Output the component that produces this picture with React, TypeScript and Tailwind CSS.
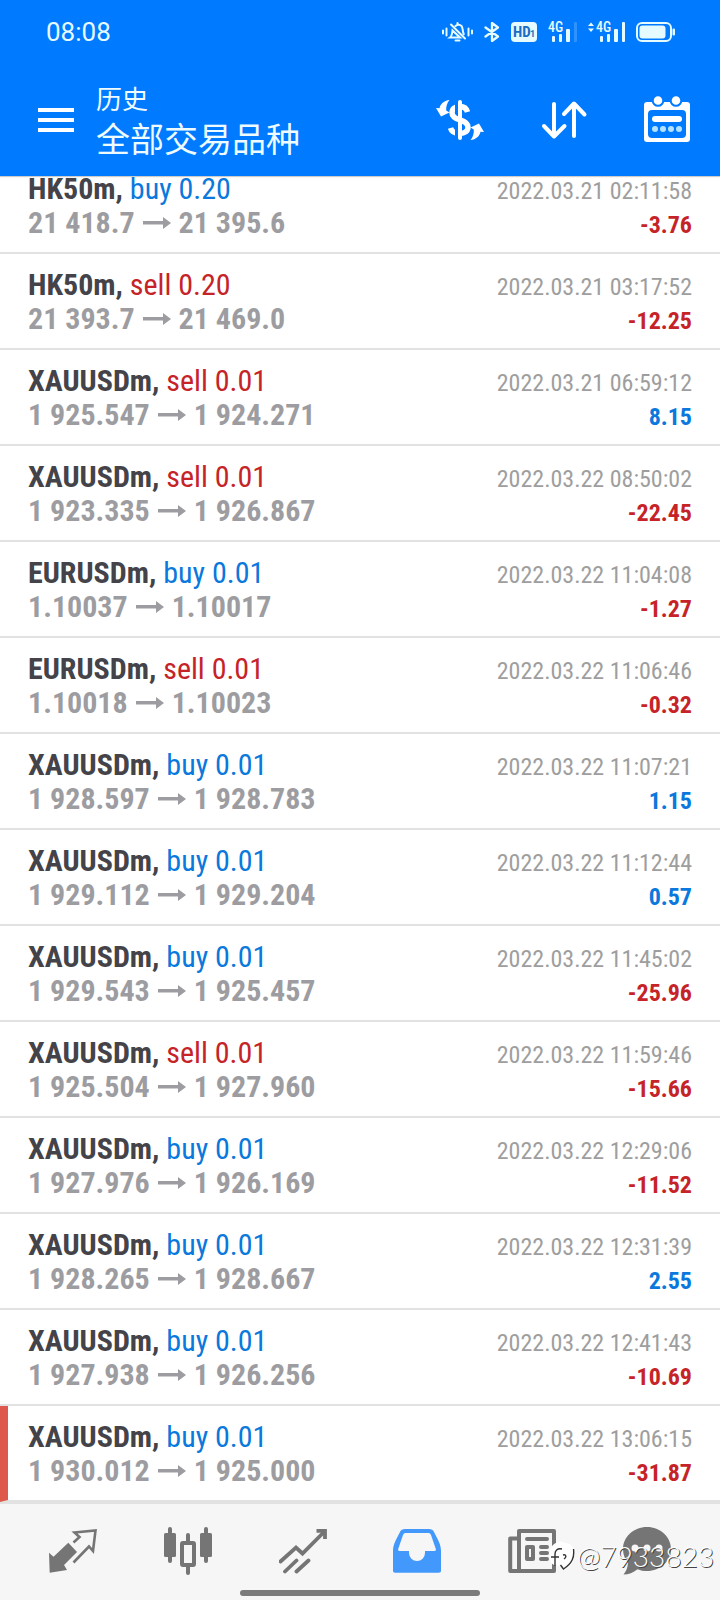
import type { ReactNode } from "react";
import clsx from "clsx";

type Deal = {
  symbol: string;
  side: "buy" | "sell";
  volume: string;
  open: string;
  close: string;
  time: string;
  profit: string;
  flagged?: boolean;
};

const deals: Deal[] = [
  { symbol: "HK50m", side: "buy", volume: "0.20", open: "21 418.7", close: "21 395.6", time: "2022.03.21 02:11:58", profit: "-3.76" },
  { symbol: "HK50m", side: "sell", volume: "0.20", open: "21 393.7", close: "21 469.0", time: "2022.03.21 03:17:52", profit: "-12.25" },
  { symbol: "XAUUSDm", side: "sell", volume: "0.01", open: "1 925.547", close: "1 924.271", time: "2022.03.21 06:59:12", profit: "8.15" },
  { symbol: "XAUUSDm", side: "sell", volume: "0.01", open: "1 923.335", close: "1 926.867", time: "2022.03.22 08:50:02", profit: "-22.45" },
  { symbol: "EURUSDm", side: "buy", volume: "0.01", open: "1.10037", close: "1.10017", time: "2022.03.22 11:04:08", profit: "-1.27" },
  { symbol: "EURUSDm", side: "sell", volume: "0.01", open: "1.10018", close: "1.10023", time: "2022.03.22 11:06:46", profit: "-0.32" },
  { symbol: "XAUUSDm", side: "buy", volume: "0.01", open: "1 928.597", close: "1 928.783", time: "2022.03.22 11:07:21", profit: "1.15" },
  { symbol: "XAUUSDm", side: "buy", volume: "0.01", open: "1 929.112", close: "1 929.204", time: "2022.03.22 11:12:44", profit: "0.57" },
  { symbol: "XAUUSDm", side: "buy", volume: "0.01", open: "1 929.543", close: "1 925.457", time: "2022.03.22 11:45:02", profit: "-25.96" },
  { symbol: "XAUUSDm", side: "sell", volume: "0.01", open: "1 925.504", close: "1 927.960", time: "2022.03.22 11:59:46", profit: "-15.66" },
  { symbol: "XAUUSDm", side: "buy", volume: "0.01", open: "1 927.976", close: "1 926.169", time: "2022.03.22 12:29:06", profit: "-11.52" },
  { symbol: "XAUUSDm", side: "buy", volume: "0.01", open: "1 928.265", close: "1 928.667", time: "2022.03.22 12:31:39", profit: "2.55" },
  { symbol: "XAUUSDm", side: "buy", volume: "0.01", open: "1 927.938", close: "1 926.256", time: "2022.03.22 12:41:43", profit: "-10.69" },
  { symbol: "XAUUSDm", side: "buy", volume: "0.01", open: "1 930.012", close: "1 925.000", time: "2022.03.22 13:06:15", profit: "-31.87", flagged: true },
];

function StatusBar() {
  return (
    <div className="flex h-16 items-center justify-between pr-[45px] pl-[46px] text-[#e6fbff]">
      <span className="text-[26px] leading-8">08:08</span>
      <div className="flex items-center gap-[11px]">
        {/* muted bell */}
        <svg width="31" height="20" viewBox="0 0 31 20" fill="none" stroke="currentColor" strokeWidth="2" strokeLinecap="round">
          <path d="M1 8.500v3M4.500 6.500v7M26.500 6.500v7M30 8.500v3" />
          <path d="M8 15.500c2-1.500 2.200-3.500 2.500-7L18 15.500zM13.500 4c2-2 5-1.600 6.300.4 1.300 2.300.6 5 2 7.800M13.500 18.500h4M9 2.500l14 14M15.500 1v1" />
        </svg>
        {/* bluetooth */}
        <svg width="16" height="20" viewBox="0 0 16 20" fill="none" stroke="currentColor" strokeWidth="2.300" strokeLinejoin="round" strokeLinecap="round">
          <path d="M1.500 5.500L14 14.500l-6 4.500V1l6 4.500L1.500 14.500" />
        </svg>
        <svg width="26" height="20" viewBox="0 0 26 20">
          <rect width="26" height="20" rx="4" fill="currentColor" />
          <text x="2" y="15" fontSize="15" fontWeight="700" fill="#1a6fc4" fontFamily="Roboto Condensed, Liberation Sans Narrow, sans-serif">HD</text>
          <text x="19" y="15" fontSize="9" fontWeight="700" fill="#1a6fc4" fontFamily="Roboto, sans-serif">1</text>
        </svg>
        <svg className="overflow-visible" width="29" height="20" viewBox="0 0 29 20" fill="currentColor">
          <text x="0" y="10" fontSize="14" fontWeight="500" fontFamily="Roboto Condensed, sans-serif">4G</text>
          <rect x="4" y="14" width="3" height="6" rx="1" />
          <rect x="11" y="12" width="3" height="8" rx="1" />
          <rect x="18" y="7" width="4" height="13" rx="1" />
          <rect x="26" y="0" width="3" height="20" rx="1" opacity=".2" />
        </svg>
        <svg className="overflow-visible" width="37" height="20" viewBox="0 0 37 20" fill="currentColor">
          <path d="M0 4l3-3.500L6 4zM0 6.500l3 3.500 3-3.500z" />
          <text x="8" y="10" fontSize="14" fontWeight="500" fontFamily="Roboto Condensed, sans-serif">4G</text>
          <rect x="12" y="14" width="3" height="6" rx="1" />
          <rect x="19" y="12" width="3" height="8" rx="1" />
          <rect x="26" y="7" width="4" height="13" rx="1" />
          <rect x="34" y="0" width="3" height="20" rx="1" />
        </svg>
        <svg width="39" height="20" viewBox="0 0 39 20">
          <rect x="1" y="1" width="34" height="18" rx="5" fill="none" stroke="currentColor" strokeWidth="2" />
          <rect x="3.500" y="3.500" width="26" height="13" rx="3" fill="currentColor" />
          <rect x="36.500" y="6.500" width="2.500" height="7" rx="1" fill="currentColor" />
        </svg>
      </div>
    </div>
  );
}

function ExchangeIcon() {
  return (
    <svg width="48" height="48" viewBox="0 0 48 48" fill="none">
      <path d="M31.500 16c-1-3.500-3.500-5.500-7.500-5.500-5 0-8 2.300-8 6.200 0 4.500 4 6 8 7.300 5 1.500 8 3.500 8 7.300 0 4-3.500 6.200-8 6.200-5 0-8.500-2-9.500-5.500" stroke="currentColor" strokeWidth="5.500" />
      <path d="M20.500 6v12M20.500 30v12" stroke="#007aff" strokeWidth="3" />
      <path d="M24 6v36" stroke="currentColor" strokeWidth="4" strokeLinecap="round" />
      <path d="M13.500 4C8 4.500 4.300 8 3.500 12.300L0 12l5 8.500 8.500-4-3.300-2C10 10.500 11 7 13.500 4z" fill="currentColor" />
      <path d="M34.500 44c5.500-.5 9.200-4 10-8.300l3.500.3-5-8.500-8.500 4 3.300 2c.2 4-.8 7.500-3.300 10.500z" fill="currentColor" />
    </svg>
  );
}

function SortIcon() {
  return (
    <svg width="48" height="48" viewBox="0 0 48 48" fill="none" stroke="currentColor" strokeWidth="4" strokeLinecap="round" strokeLinejoin="round">
      <path d="M14 8v32M4 30l10 10.500L24.500 30M34 40V8M24 18L34 7.500 44.500 18.500" />
    </svg>
  );
}

function CalendarIcon() {
  return (
    <svg width="48" height="48" viewBox="0 0 48 48" fill="none">
      <rect y="6" width="46" height="40" rx="3" fill="currentColor" />
      <rect x="4" y="14" width="38" height="28" rx="4" fill="#007aff" />
      <g fill="currentColor" stroke="#007aff" strokeWidth="2">
        <circle cx="14" cy="4.500" r="5.300" />
        <circle cx="32" cy="4.500" r="5.300" />
      </g>
      <rect x="8" y="20" width="30" height="6" rx="3" fill="currentColor" />
      <g fill="#b5e3ff">
        <circle cx="11" cy="33" r="3" />
        <circle cx="19" cy="33" r="3" />
        <circle cx="27" cy="33" r="3" />
        <circle cx="35" cy="33" r="3" />
      </g>
    </svg>
  );
}

function Header() {
  return (
    <header className="relative z-10 shrink-0 bg-[#007aff] text-white shadow-[0_1px_1px_rgba(0,0,0,0.2)]">
      <StatusBar />
      <div className="flex h-28 items-center pr-7 pl-[38px]">
        <button type="button" aria-label="Menu" className="flex w-9 flex-col gap-1.5">
          <span className="h-1 bg-white" />
          <span className="h-1 bg-white" />
          <span className="h-1 bg-white" />
        </button>
        <div className="ml-[22px] flex-1 pt-1 text-[#effcff]">
          <p className="text-[26px] leading-9">历史</p>
          <h1 className="text-[34px] leading-[44px]">全部交易品种</h1>
        </div>
        <div className="flex gap-14">
          <button type="button" aria-label="Symbols"><ExchangeIcon /></button>
          <button type="button" aria-label="Sort"><SortIcon /></button>
          <button type="button" aria-label="Period"><CalendarIcon /></button>
        </div>
      </div>
    </header>
  );
}

function DealRow({ deal }: { deal: Deal }) {
  return (
    <li
      className={clsx(
        "flex h-24 shrink-0 items-baseline justify-between border-b-2 border-[#e2e2e2] pt-3.5 pr-7 leading-[34px] whitespace-nowrap",
        deal.flagged ? "border-l-8 border-l-[#de584c] pl-5" : "pl-7",
      )}
    >
      <div className="text-[30px]">
        <p className="font-bold text-[#434349]">
          {deal.symbol},{" "}
          <span className={clsx("font-normal", deal.side === "buy" ? "text-[#0a78dc]" : "text-[#c62328]")}>
            {deal.side} {deal.volume}
          </span>
        </p>
        <p className="flex items-center font-bold text-[#9d9da1]">
          {deal.open}
          <svg className="mx-2" width="28" height="14" viewBox="0 0 28 14" fill="currentColor">
            <path d="M0 5h20V1l8 6-8 6V8.500H0z" />
          </svg>
          {deal.close}
        </p>
      </div>
      <div className="text-right text-[24px]">
        <p className="text-[#9e9e9e]">{deal.time}</p>
        <p className={clsx("font-bold", deal.profit.startsWith("-") ? "text-[#c62328]" : "text-[#0a78dc]")}>
          {deal.profit}
        </p>
      </div>
    </li>
  );
}

function NavItem({ label, active = false, children }: { label: string; active?: boolean; children: ReactNode }) {
  return (
    <a href="#" aria-label={label} className={clsx("flex justify-center", active ? "text-[#4299fb]" : "text-[#757575]")}>
      <svg width="48" height="48" viewBox="0 0 48 48" fill="none">
        {children}
      </svg>
    </a>
  );
}

function BottomNav() {
  return (
    <nav className="relative shrink-0 border-t-2 border-[#e2e2e2] bg-[#f6f6f6] pt-[23px] pb-1">
      <div className="grid grid-cols-6 px-4">
        <NavItem label="Quotes">
          <path d="M24.500 15.500l6-5.500-5-4.500L46.500 3.500 44 24l-4-4.500-15.500 16" stroke="currentColor" strokeWidth="2.600" />
          <path d="M19.300 15.700L28 25 15 38l3 5-17.300 2.700L0 25.700l4.500 4z" fill="currentColor" />
        </NavItem>
        <NavItem label="Chart">
          <g fill="currentColor">
            <rect y="6" width="12" height="24" rx="1.500" />
            <rect x="4" width="4" height="36" rx="2" />
            <rect x="36" y="6" width="12" height="24" rx="1.500" />
            <rect x="40" width="4" height="36" rx="2" />
            <rect x="22" y="6" width="4" height="10" rx="2" />
            <rect x="22" y="38" width="4" height="10" rx="2" />
          </g>
          <rect x="18" y="16" width="12" height="22" rx="1" stroke="currentColor" strokeWidth="4" />
        </NavItem>
        <NavItem label="Trade">
          <g stroke="currentColor" strokeWidth="3.800" strokeLinecap="round">
            <path d="M1.500 34.500L17 20.500l6.500 6L45 5M6 44.500L17.500 33.500M17.500 44.500L29.500 33.500" />
            <path d="M37.500 3.800H46V12" strokeLinecap="butt" />
          </g>
        </NavItem>
        <NavItem label="History" active>
          <path
            fillRule="evenodd"
            fill="currentColor"
            d="M12 2h24c2.500 0 4 .8 5 3 3.500 7 7 12 7 19v19.500c0 1.500-.8 2.200-2.200 2.200H2.200C.8 45.700 0 45 0 43.500V24C0 17 3.500 12 7 5c1-2.200 2.500-3 5-3zM13 6c-1.500 0-2.300.6-3 2L5.200 22c-.3 1.300.2 2 1.300 2H16v2a8 8 0 0016 0v-2h9.500c1.100 0 1.600-.7 1.300-2L38 8c-.7-1.400-1.500-2-3-2z"
          />
        </NavItem>
        <NavItem label="News">
          <g stroke="currentColor" strokeWidth="4" strokeLinejoin="round">
            <path d="M11 4h35v40H11zM9 11.500H2.200V44H11" />
            <path d="M19 12h20M33 20h6M33 26h6M33 32h6" strokeLinecap="round" />
            <path d="M19 20h6v12h-6z" />
          </g>
        </NavItem>
        <NavItem label="Messages">
          <path d="M24 0c13.300 0 24 9.800 24 22S37.300 44 24 44c-3.500 0-6.500-.5-9.500-1.800C10 45.500 6 47.500.5 47.500 3.500 44 4.500 40.500 5 36 1.800 32 0 27.500 0 22 0 9.800 10.700 0 24 0z" fill="currentColor" />
          <g fill="#f6f6f6">
            <circle cx="12" cy="21" r="3.500" />
            <circle cx="24" cy="21" r="3.500" />
            <circle cx="36" cy="21" r="3.500" />
          </g>
        </NavItem>
      </div>
      <div className="mx-auto mt-[15px] h-1.5 w-60 rounded-full bg-[#7b7b7b]" />

      {/* account watermark */}
      <div className="pointer-events-none absolute right-1.5 bottom-7 flex items-center gap-0.5">
        <svg width="26" height="30" viewBox="0 0 26 30" fill="none">
          <path d="M9 1c3-1 5 0 7 1 6 0 9 4 9 10 0 8-2 12-10 16l-3-4c-7 2-11-1-11-8C0 8 3 3 9 1z" fill="#fff" />
          <path d="M6 25V13c0-3 2-6 7-5M2 16h8M14 14c3-1 4 2 1 4M24.500 8c1 8-1 14-10 20l-3-4" stroke="#333" strokeWidth="1.400" />
        </svg>
        <span className="font-['Lato'] text-[28px] leading-8 font-light text-white [text-shadow:1px_1px_0_#444]">
          @7933823
        </span>
      </div>
    </nav>
  );
}

export default function App() {
  return (
    <div className="flex h-screen flex-col bg-white font-['Roboto','Noto_Sans_CJK_SC',sans-serif]">
      <Header />
      {/* scrolled to the latest deal */}
      <main className="flex min-h-0 flex-1 flex-col justify-end overflow-hidden">
        <ul className="flex flex-col font-['Roboto_Condensed','Liberation_Sans_Narrow','Roboto',sans-serif]">
          {deals.map((deal) => (
            <DealRow key={deal.time} deal={deal} />
          ))}
        </ul>
      </main>
      <BottomNav />
    </div>
  );
}
